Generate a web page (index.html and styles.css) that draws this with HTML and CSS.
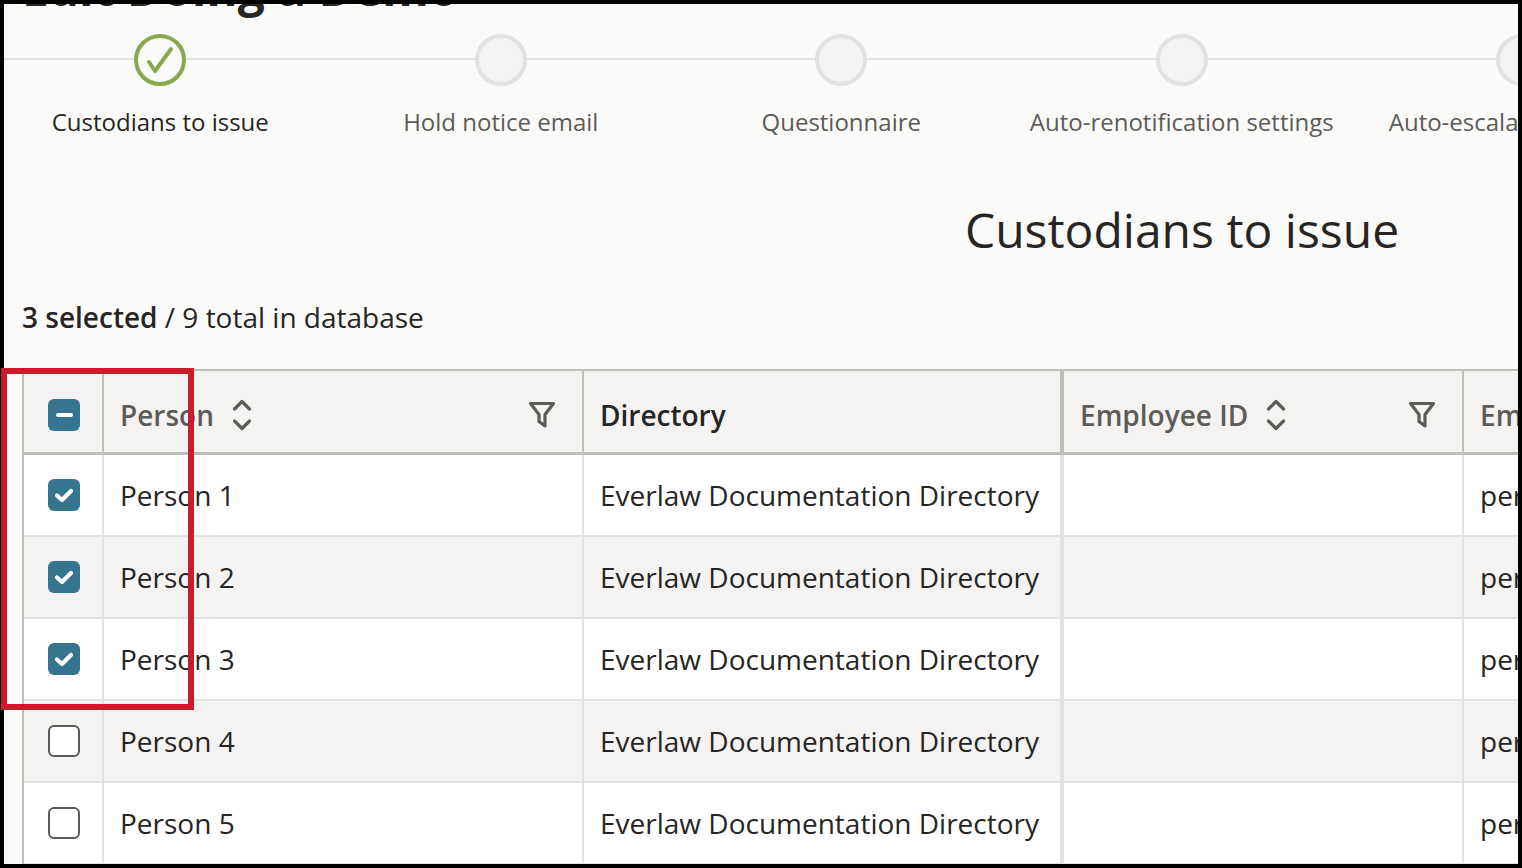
FILE: index.html
```html
<!DOCTYPE html>
<html lang="en">
<head>
<meta charset="utf-8">
<title>Edit Doing a Demo</title>
<link rel="stylesheet" href="styles.css">
</head>
<body>
<svg class="defs" width="0" height="0" aria-hidden="true">
  <symbol id="sort" viewBox="0 0 20 32"><path d="M2.500 10 10 2.500 17.500 10M2.500 22 10 29.500 17.500 22" fill="none" stroke="currentColor" stroke-width="3.200" stroke-linecap="round" stroke-linejoin="round"/></symbol>
  <symbol id="filter" viewBox="0 0 28 28"><path d="M2.500 2.500h23L17 13.500V25l-6-4.500v-7z" fill="none" stroke="currentColor" stroke-width="3.200" stroke-linejoin="round"/></symbol>
  <symbol id="tick" viewBox="0 0 32 32"><path d="M9 16.500 14 21 23 12" fill="none" stroke="#fff" stroke-width="4.200" stroke-linecap="round" stroke-linejoin="round"/></symbol>
</svg>
<main class="frame">
  <h1 class="page-title">Edit Doing a Demo</h1>
  <ol class="stepper">
    <li class="step done"><span class="dot"><svg viewBox="0 0 52 52" width="52" height="52"><path d="M15 28 21 37 37 15" fill="none" stroke="#8aa84f" stroke-width="4" stroke-linecap="round" stroke-linejoin="round"/></svg></span><span class="step-label">Custodians to issue</span></li>
    <li class="step"><span class="dot"></span><span class="step-label">Hold notice email</span></li>
    <li class="step"><span class="dot"></span><span class="step-label">Questionnaire</span></li>
    <li class="step"><span class="dot"></span><span class="step-label">Auto-renotification settings</span></li>
    <li class="step"><span class="dot"></span><span class="step-label">Auto-escalation settings</span></li>
  </ol>
  <h2 class="section-title">Custodians to issue</h2>
  <p class="count"><b>3 selected</b> / 9 total in database</p>
  <table class="grid">
    <colgroup><col class="c-check"><col class="c-person"><col class="c-dir"><col class="c-id"><col class="c-email"></colgroup>
    <thead>
      <tr>
        <th class="check"><span class="box on"><svg viewBox="0 0 32 32" width="32" height="32"><path d="M10 16h13" fill="none" stroke="#fff" stroke-width="4" stroke-linecap="round"/></svg></span></th>
        <th class="muted"><div class="head"><span>Person</span><svg class="sort"><use href="#sort"/></svg><svg class="filter"><use href="#filter"/></svg></div></th>
        <th class="thick">Directory</th>
        <th class="muted"><div class="head"><span>Employee ID</span><svg class="sort"><use href="#sort"/></svg><svg class="filter"><use href="#filter"/></svg></div></th>
        <th class="muted">Email</th>
      </tr>
    </thead>
    <tbody>
      <tr><td class="check"><span class="box on"><svg width="32" height="32"><use href="#tick"/></svg></span></td><td>Person 1</td><td class="thick">Everlaw Documentation Directory</td><td></td><td>person1@example.com</td></tr>
      <tr><td class="check"><span class="box on"><svg width="32" height="32"><use href="#tick"/></svg></span></td><td>Person 2</td><td class="thick">Everlaw Documentation Directory</td><td></td><td>person2@example.com</td></tr>
      <tr><td class="check"><span class="box on"><svg width="32" height="32"><use href="#tick"/></svg></span></td><td>Person 3</td><td class="thick">Everlaw Documentation Directory</td><td></td><td>person3@example.com</td></tr>
      <tr><td class="check"><span class="box"></span></td><td>Person 4</td><td class="thick">Everlaw Documentation Directory</td><td></td><td>person4@example.com</td></tr>
      <tr><td class="check"><span class="box"></span></td><td>Person 5</td><td class="thick">Everlaw Documentation Directory</td><td></td><td>person5@example.com</td></tr>
    </tbody>
  </table>
</main>
<div class="highlight"></div>
</body>
</html>
```
FILE: styles.css
```css
* { box-sizing: border-box; }
html, body { margin: 0; height: 100%; overflow: hidden; }
body { background: #000; font-family: "Open Sans", "Liberation Sans", sans-serif; color: #262523; }
.defs { position: absolute; }
.frame {
  width: 1522px;
  height: 868px;
  border: 4px solid #000;
  background: #fafaf8;
  overflow: hidden;
}
.page-title {
  margin: -44px 0 0 18px;
  font-size: 47.800px;
  line-height: 56px;
  font-weight: 700;
  white-space: nowrap;
}
.stepper {
  list-style: none;
  display: flex;
  width: 1900px;
  margin: 18px 0 0 -14px;
  padding: 0;
}
.step {
  flex: 0 0 340.500px;
  display: flex;
  flex-direction: column;
  align-items: center;
  position: relative;
  color: #5d5b58;
}
.step::before {
  content: "";
  position: absolute;
  left: 0;
  right: 0;
  top: 24px;
  height: 2px;
  background: #e3e2e0;
}
.step.done { color: #262523; }
.dot {
  position: relative;
  width: 52px;
  height: 52px;
  border: 4px solid #e3e2e0;
  border-radius: 50%;
  background: #f4f3f2;
  display: block;
}
.done .dot { border-color: #8aa84f; background: #fafaf8; }
.done .dot svg { display: block; margin: -4px; }
.step-label {
  margin-top: 19px;
  font-size: 24px;
  line-height: 34px;
  white-space: nowrap;
}
.section-title {
  width: 2356px;
  margin: 58px 0 0;
  text-align: center;
  font-size: 48px;
  line-height: 66px;
  font-weight: 400;
  white-space: nowrap;
}
.count {
  margin: 35px 0 0 18px;
  font-size: 28px;
  line-height: 38px;
}
.count b { font-weight: 600; }
.grid {
  margin: 33px 0 0 18px;
  table-layout: fixed;
  width: 1800px;
  border-collapse: separate;
  border-spacing: 0;
  font-size: 28px;
  border-left: 2px solid #c0bebb;
}
.c-check { width: 80px; }
.c-person { width: 480px; }
.c-dir { width: 480px; }
.c-id { width: 400px; }
.c-email { width: 360px; }
th, td {
  padding: 0 16px;
  text-align: left;
  white-space: nowrap;
  overflow: hidden;
  border-right: 2px solid #e3e2e0;
  border-bottom: 2px solid #e3e2e0;
}
th {
  height: 86px;
  padding-top: 7px;
  font-weight: 600;
  background: #f4f3f2;
  border-top: 2px solid #c0bebb;
  border-bottom-width: 3px;
  border-bottom-color: #c0bebb;
  border-right-color: #c0bebb;
}
td { height: 82px; background: #fff; }
tbody tr:nth-child(even) td { background: #f4f3f2; }
.thick { border-right-width: 4px; }
th.thick { border-right-color: #c0bebb; }
.muted { color: #5d5b58; }
.head { display: flex; align-items: center; }
.sort { width: 20px; height: 32px; margin-left: 18px; color: #5d5b58; }
.filter { width: 28px; height: 28px; margin-left: auto; margin-right: 10px; color: #5d5b58; }
.check { padding: 0 0 0 2px; text-align: center; }
th.check { padding: 1px 0 0 2px; }
td.check { padding: 0 0 6px 2px; }
.box {
  display: inline-block;
  width: 32px;
  height: 32px;
  border: 2px solid #5d5b58;
  border-radius: 6px;
  background: #fff;
  vertical-align: middle;
}
.box.on { border: 0; background: #35758f; }
.box svg { display: block; }
.highlight {
  position: absolute;
  left: 1px;
  top: 368px;
  width: 193px;
  height: 342px;
  border: 6px solid #c81e2b;
}
```
